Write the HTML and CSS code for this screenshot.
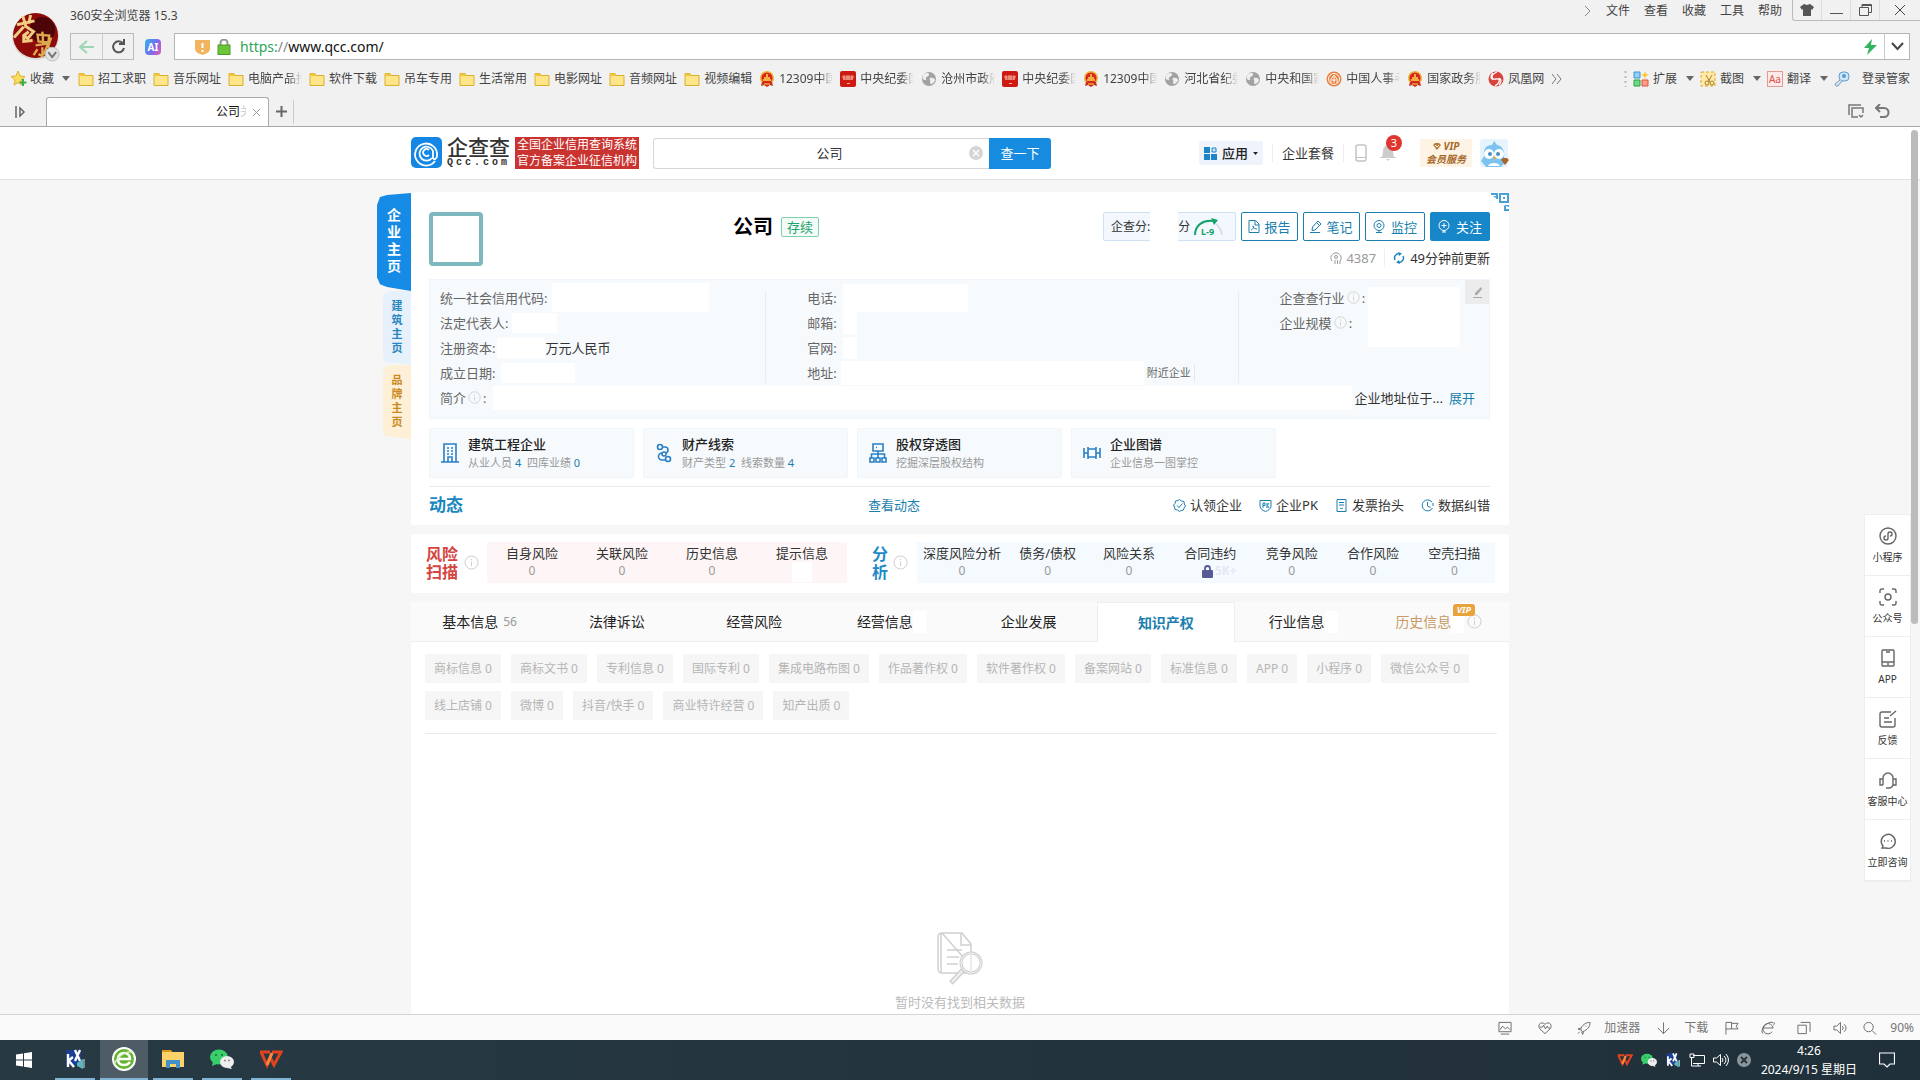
FILE: index.html
```html
<!DOCTYPE html>
<html lang="zh-CN">
<head>
    <meta charset="UTF-8">
    <meta name="viewport" content="width=device-width, initial-scale=1.0">
    <title>企查查</title>
    <link rel="stylesheet" href="styles.css">
</head>
<body>
    <!-- shared icons -->
    <svg class="sprite" aria-hidden="true">
        <symbol id="folder" viewBox="0 0 16 16"><path d="M1 2.500h5l1 2h8v10H1z" fill="#ffe58a" stroke="#d9b02c"/><path d="M1.500 2.500h4.500l1 2.500H1.500z" fill="#f0c53c"/></symbol>
        <symbol id="emblem" viewBox="0 0 16 16"><circle cx="8" cy="7" r="7" fill="#f0b13a"/><circle cx="8" cy="7" r="5.500" fill="#d6281c"/><path d="M4 9h8M5 7h6M8 3v3" stroke="#ffd84c" stroke-width="1.500"/><path d="M3 11h10l1 4-3-1-3 2-3-2-3 1z" fill="#c92a1b"/><path d="M5 13h6" stroke="#ffd84c"/></symbol>
        <symbol id="redsite" viewBox="0 0 16 16"><rect width="16" height="16" rx="2" fill="#cf1a14"/><path d="M2 6h12M3 8h10M4 4v5M7 4v5M9 4v5M12 4v5" stroke="#f3b29a"/><path d="M7 12.500h3" stroke="#f3b29a"/></symbol>
        <symbol id="globe" viewBox="0 0 16 16"><circle cx="8" cy="8" r="7" fill="#a2a2a2"/><path d="M3 3c3-2 6-1 5 1S4 6 5 8s-2 1-3 0 0-4 1-5zM9 7c3-1 5 1 5 2s-2 4-4 4 0-3-1-4 0-2 0-2z" fill="#efefef"/></symbol>
        <symbol id="orange" viewBox="0 0 16 16"><circle cx="8" cy="8" r="7.500" fill="#ea7d3a"/><circle cx="8" cy="8" r="5.500" fill="none" stroke="#fff"/><path d="M5 12V8l3-4 3 4v4M8 5v7M6 9h4" fill="none" stroke="#fff"/></symbol>
        <symbol id="phoenix" viewBox="0 0 16 16"><circle cx="8" cy="8" r="7.500" fill="#d8433e"/><path d="M9 1C2 4 3 9 8 8s4 4-1 7M5 2C1 7 4 9 6 8M11 14c4-5 1-7-1-6" fill="none" stroke="#fff" stroke-width="1.300"/></symbol>
        <symbol id="info" viewBox="0 0 16 16"><circle cx="8" cy="8" r="7" fill="none" stroke="#ccc"/><path d="M8 7v5M8 4v1.500" stroke="#ccc"/></symbol>
        <symbol id="wechat" viewBox="0 0 24 20"><ellipse cx="9" cy="8" rx="9" ry="7.500" fill="#39cd6c"/><path d="M3 12l-1 5 5-2z" fill="#39cd6c"/><circle cx="6" cy="6" r="1" fill="#186b37"/><circle cx="12" cy="6" r="1" fill="#186b37"/><ellipse cx="17" cy="13" rx="7" ry="6" fill="#eee"/><path d="M20 17l2 3-5-1z" fill="#eee"/><circle cx="15" cy="11.500" r="1" fill="#888"/><circle cx="19" cy="11.500" r="1" fill="#888"/></symbol>
        <symbol id="kx" viewBox="0 0 22 22"><path d="M2 2h15v15H2z" fill="#1b3f96"/><path d="M4 6v13M4 13l5-4M5 13l5 6M11 2l5 11M16 2l-5 11" stroke="#fff" stroke-width="2.400" fill="none"/><path d="M13 15l6-4v10l-6-3z" fill="#5ab8bd"/><path d="M20 11v9" stroke="#ddd"/></symbol>
        <symbol id="wps" viewBox="0 0 24 20"><path d="M1 3h10M2 3l6 13 5-12M11 8l4 8 7-13h-9" fill="none" stroke="#e2421f" stroke-width="3"/><path d="M8 16l5-12" stroke="#f88a3c" stroke-width="3"/></symbol>
        <symbol id="down" viewBox="0 0 8 5"><path d="M0 0h8L4 5z" fill="#666"/></symbol>
    </svg>

    <header class="chrome">
        <div class="title-row">
            <svg class="user-avatar" viewBox="0 0 50 52"><circle cx="24" cy="25" r="24" fill="#ddd"/><circle cx="24" cy="24" r="23" fill="#8f0b0b"/><circle cx="31" cy="18" r="13" fill="#4d0608"/><path d="M5 13l18-4M11 4l3 10M19 3l-2 9M12 15L2 26M13 14l9 6-6 7-5-4M17 20l-5 4v6l9-1" stroke="#f1cd83" stroke-width="3" fill="none"/><path d="M26 23l12 1-1 7-10-1zM24 34l14-2M31 20l1 14M26 38l-4 6M31 36v9l-4-2M37 32l-5 12M40 26l-3 9 3 8" stroke="#dca94f" stroke-width="2.400" fill="none"/><circle cx="41" cy="43" r="7" fill="#e3e3e3" stroke="#bbb"/><path d="M37 41l4 5 4-5" fill="none" stroke="#777" stroke-width="2"/></svg>
            <span class="app-name">360安全浏览器 15.3</span>
            <nav class="menu">
                <svg width="8" height="12" viewBox="0 0 8 12"><path d="M1 1l5 5-5 5" fill="none" stroke="#888"/></svg>
                <a href="#">文件</a><a href="#">查看</a><a href="#">收藏</a><a href="#">工具</a><a href="#">帮助</a>
            </nav>
            <div class="window-buttons">
                <button aria-label="皮肤"><svg width="14" height="12" viewBox="0 0 14 12"><path d="M4 0l3 1 3-1 4 3-2 3-1-1v7H3V5L2 6 0 3z" fill="#555"/></svg></button>
                <button aria-label="最小化"><svg width="13" height="12" viewBox="0 0 13 12"><path d="M0 9.500h13" stroke="#555"/></svg></button>
                <button aria-label="还原"><svg width="13" height="12" viewBox="0 0 13 12"><path d="M.5 3.500h9v8h-9zM3 3V.5h9.500v8H10M3 1.500h9" fill="none" stroke="#555"/></svg></button>
                <button aria-label="关闭"><svg width="12" height="12" viewBox="0 0 12 12"><path d="M1 1l10 10M11 1L1 11" stroke="#444"/></svg></button>
            </div>
        </div>

        <div class="address-row">
            <div class="nav-buttons">
                <button aria-label="后退"><svg width="16" height="14" viewBox="0 0 16 14"><path d="M15 7H1M8 1L1 7l7 6" fill="none" stroke="#9cd6b4" stroke-width="2"/></svg></button>
                <button aria-label="刷新"><svg width="15" height="15" viewBox="0 0 15 15"><path d="M12 4.500A5.500 5.500 0 1 0 13 9" fill="none" stroke="#555" stroke-width="2"/><path d="M8 5h5V0" fill="none" stroke="#555" stroke-width="2"/></svg></button>
            </div>
            <span class="ai-badge">AI</span>
            <form class="address-bar">
                <svg width="15" height="16" viewBox="0 0 15 16"><path d="M0 1h15v9c0 3-4 5-7.500 6C4 15 0 13 0 10z" fill="#f2b45e"/><path d="M7.500 4v5M7.500 11v2" stroke="#fff" stroke-width="2"/></svg>
                <svg width="14" height="16" viewBox="0 0 14 16"><path d="M3.500 7V4a3.500 3.500 0 0 1 7 0v3" fill="none" stroke="#8f9a8f" stroke-width="2"/><rect x="1" y="6" width="12" height="9.500" fill="#6cc53b" stroke="#4d9a2a"/></svg>
                <label for="url"><span class="scheme">https:</span>//</label><input id="url" type="text" value="www.qcc.com/">
                <svg width="13" height="16" viewBox="0 0 13 16"><path d="M8 0L0 9h5l-2 7 10-10H7z" fill="#34b35f"/></svg>
                <button type="button" class="address-more" aria-label="更多"><svg width="13" height="9" viewBox="0 0 13 9"><path d="M1 1l5.500 6L12 1" fill="none" stroke="#444" stroke-width="2"/></svg></button>
            </form>
        </div>

        <div class="bookmark-row">
            <a class="fav" href="#"><svg width="17" height="17" viewBox="0 0 17 17"><path d="M8 1l2 5 5 .5-4 3.500 1 5-4-2.500L4 15l1-5-4-3.500L6 6z" fill="#fbdc5f" stroke="#e0b32f"/><path d="M13 9v7M9.500 12.500h7" stroke="#3cae4d" stroke-width="2"/></svg>收藏<svg class="caret"><use href="#down"/></svg></a>
            <div class="bookmarks">
                <a class="folder" href="#"><svg><use href="#folder"/></svg><span>招工求职</span></a>
                <a class="folder" href="#"><svg><use href="#folder"/></svg><span>音乐网址</span></a>
                <a class="folder cut" href="#"><svg><use href="#folder"/></svg><span>电脑产品推</span></a>
                <a class="folder" href="#"><svg><use href="#folder"/></svg><span>软件下载</span></a>
                <a class="folder" href="#"><svg><use href="#folder"/></svg><span>吊车专用</span></a>
                <a class="folder" href="#"><svg><use href="#folder"/></svg><span>生活常用</span></a>
                <a class="folder" href="#"><svg><use href="#folder"/></svg><span>电影网址</span></a>
                <a class="folder" href="#"><svg><use href="#folder"/></svg><span>音频网址</span></a>
                <a class="folder" href="#"><svg><use href="#folder"/></svg><span>视频编辑</span></a>
                <a class="site cut" href="#"><svg><use href="#emblem"/></svg><span>12309中国</span></a>
                <a class="site cut" href="#"><svg><use href="#redsite"/></svg><span>中央纪委国</span></a>
                <a class="site cut" href="#"><svg><use href="#globe"/></svg><span>沧州市政府</span></a>
                <a class="site cut" href="#"><svg><use href="#redsite"/></svg><span>中央纪委国</span></a>
                <a class="site cut" href="#"><svg><use href="#emblem"/></svg><span>12309中国</span></a>
                <a class="site cut" href="#"><svg><use href="#globe"/></svg><span>河北省纪委</span></a>
                <a class="site cut" href="#"><svg><use href="#globe"/></svg><span>中央和国家</span></a>
                <a class="site cut" href="#"><svg><use href="#orange"/></svg><span>中国人事考</span></a>
                <a class="site cut" href="#"><svg><use href="#emblem"/></svg><span>国家政务服</span></a>
                <a class="site" href="#"><svg><use href="#phoenix"/></svg><span>凤凰网</span></a>
                <svg class="more" viewBox="0 0 12 12"><path d="M1 1l4 5-4 5M6 1l4 5-4 5" fill="none" stroke="#777"/></svg>
            </div>
            <div class="tools">
                <svg width="3" height="16" viewBox="0 0 3 16"><path d="M1.500 0v16" stroke="#bbb" stroke-width="2" stroke-dasharray="2 3"/></svg>
                <a href="#"><svg width="16" height="16" viewBox="0 0 16 16"><path d="M1 1h6v6H1z" fill="#8fd0f5" stroke="#3c93cf"/><path d="M1 9h6v6H1z" fill="#72d684" stroke="#2ba145"/><path d="M9 9h6v6H9z" fill="#ff9b87" stroke="#dc543c"/><path d="M12 0l1 3 3 1-3 1-1 3-1-3-3-1 3-1z" fill="#fbc621"/></svg>扩展<svg class="caret"><use href="#down"/></svg></a>
                <a href="#"><svg width="16" height="16" viewBox="0 0 16 16"><path d="M1 1h14v14H1z" fill="#ffe9a6" stroke="#dda933" stroke-dasharray="3 2"/><path d="M6 4l4 7M12 4l-4 7" stroke="#a98330"/><circle cx="7" cy="12" r="2" fill="none" stroke="#a98330"/><circle cx="12" cy="12" r="2" fill="none" stroke="#a98330"/></svg>截图<svg class="caret"><use href="#down"/></svg></a>
                <a href="#"><span class="aa">Aa</span>翻译<svg class="caret"><use href="#down"/></svg></a>
                <a class="keeper" href="#"><svg width="16" height="16" viewBox="0 0 16 16"><rect x="5" y="1" width="10" height="9" rx="4" fill="#cfe6f8" stroke="#5d9bd0"/><circle cx="10" cy="5" r="2" fill="#5d9bd0"/><path d="M6 9l-5 4 1 2h2l4-5" fill="#cfe6f8" stroke="#8a9aa8"/></svg>登录管家</a>
            </div>
        </div>

        <div class="tab-row">
            <svg class="side-toggle" viewBox="0 0 11 12"><path d="M1 0v12M5 2l4 4-4 4z" fill="none" stroke="#666" stroke-width="1.500"/></svg>
            <div class="browser-tab"><span>公司</span><i>关</i><button aria-label="关闭标签"><svg width="9" height="9" viewBox="0 0 9 9"><path d="M1 1l7 7M8 1L1 8" stroke="#999"/></svg></button></div>
            <button class="new-tab" aria-label="新建标签"><svg width="11" height="11" viewBox="0 0 11 11"><path d="M5.500 0v11M0 5.500h11" stroke="#666" stroke-width="2"/></svg></button>
            <div class="tab-tools">
                <svg width="16" height="15" viewBox="0 0 16 15"><path d="M1 11V1h12M10 13H4V4h11v5" fill="none" stroke="#777" stroke-width="1.500"/><path d="M11 11l2 2 2-2" fill="none" stroke="#777" stroke-width="1.500"/></svg>
                <svg width="15" height="14" viewBox="0 0 15 14"><path d="M5 0L1 4l4 4M1 4h8a4.500 4.500 0 0 1 0 9H5" fill="none" stroke="#777" stroke-width="2"/></svg>
            </div>
        </div>
    </header>

    <div class="page">
        <div class="site-header">
            <div class="wrap site-header-inner">
                <a class="logo" href="#">
                    <svg width="31" height="31" viewBox="0 0 31 31"><rect width="31" height="31" rx="5" fill="#1487e5"/><path d="M24 24a11 11 0 1 1 2-5M21 21a7 7 0 1 1 1-7v7c1 2 4 1 4-2" fill="none" stroke="#fff" stroke-width="1.800"/><path d="M18 13a3.500 3.500 0 1 0 0 5" fill="none" stroke="#fff" stroke-width="1.800"/></svg>
                    <span class="logo-text"><b>企查查</b><small>Qcc.com</small></span>
                </a>
                <p class="slogan">全国企业信用查询系统<br>官方备案企业征信机构</p>
                <form class="search">
                    <input type="text" value="公司" aria-label="搜索企业">
                    <button type="button" class="clear" aria-label="清空"><svg width="14" height="14" viewBox="0 0 14 14"><circle cx="7" cy="7" r="7" fill="#d5d5d5"/><path d="M4 4l6 6M10 4l-6 6" stroke="#fff" stroke-width="1.500"/></svg></button>
                    <button type="button" class="search-btn">查一下</button>
                </form>
                <nav class="site-nav">
                    <a class="apps" href="#"><svg width="13" height="13" viewBox="0 0 13 13"><path d="M0 0h6v6H0zM0 7h6v6H0zM7 7h6v6H7z" fill="#1d84c8"/><path d="M8 1h4v4H8z" fill="#cfe4f6" stroke="#1d84c8"/></svg>应用<svg width="5" height="3" viewBox="0 0 8 5"><path d="M0 0h8L4 5z" fill="#222"/></svg></a>
                    <a class="package" href="#">企业套餐</a>
                    <a class="phone" href="#" aria-label="手机版"><svg width="12" height="18" viewBox="0 0 12 18"><rect x="1" y="1" width="10" height="16" rx="2" fill="#fff" stroke="#c4c4c4" stroke-width="1.500"/><path d="M1 13.500h10" stroke="#c4c4c4"/></svg></a>
                    <a class="bell" href="#" aria-label="消息"><svg width="16" height="16" viewBox="0 0 16 16"><path d="M8 0c4 1 5 3 5 7l1 5h2v1H0v-1h2l1-5c0-4 1-6 5-7zM6 14h4l-2 2z" fill="#cdcdcd"/></svg><span class="badge">3</span></a>
                    <a class="vip" href="#"><em><svg width="8" height="7" viewBox="0 0 8 7"><path d="M0 2l2-2h4l2 2-4 5z" fill="#b87b35"/><path d="M2 2l2 2 2-2" fill="none" stroke="#fff"/></svg> VIP</em><em>会员服务</em></a>
                    <a class="qcc-avatar" href="#" aria-label="个人中心"><svg width="29" height="28" viewBox="0 0 29 28"><rect width="28" height="28" rx="3" fill="#e8f4fd"/><path d="M14 2l3 4c6 1 8 7 7 12l2 4-5 6H6l-5-6 3-5C3 10 6 6 12 6z" fill="#7cc3f0"/><circle cx="9" cy="15" r="5" fill="#fff"/><circle cx="19" cy="15" r="5" fill="#fff"/><circle cx="10" cy="15" r="2" fill="#4a8fc4"/><circle cx="18" cy="15" r="2" fill="#4a8fc4"/><path d="M13 18h3l-1 3z" fill="#f5a623"/><path d="M8 27c1-4 11-4 12 0" fill="#fff"/><path d="M21 21l2-2h4l2 2-4 5z" fill="#a5682a"/></svg></a>
                </nav>
            </div>
        </div>

        <main class="wrap content">
            <nav class="side-tabs">
                <a class="side-tab main" href="#">企业主页</a>
                <a class="side-tab build" href="#">建筑主页</a>
                <a class="side-tab brand" href="#">品牌主页</a>
            </nav>

            <section class="card company">
                <svg class="qr" viewBox="0 0 18 18"><path d="M0 1h6v5M18 17h-4v-4" fill="none" stroke="#4a9fd6" stroke-width="2"/><path d="M9 1h8v8H9z" fill="none" stroke="#4a9fd6" stroke-width="2"/><path d="M12 4h2v2h-2zM2 3h3v2zM12 12h6v2z" fill="#4a9fd6"/></svg>
                <div class="company-head">
                    <div class="company-logo"></div>
                    <div class="company-name">
                        <h1>公司</h1><span class="status">存续</span>
                    </div>
                    <div class="head-right">
                        <div class="actions">
                            <div class="score"><span>企查分:</span><i class="mask"></i><span>分</span><svg width="29" height="18" viewBox="0 0 29 18"><path d="M1 17C1 7 9 2 19 3" fill="none" stroke="#12a36b" stroke-width="2"/><path d="M17 0l7 2-4 5z" fill="#12a36b"/><path d="M22 6q5 4 6 11" fill="none" stroke="#ddd" stroke-width="2"/><text x="7" y="17" font-size="9" font-weight="700" font-family="Noto Sans" fill="#12a36b">L-9</text></svg></div>
                            <button class="btn"><svg width="12" height="13" viewBox="0 0 12 13"><path d="M1 .5h6.500L11 4v8.500H1zM7 1v4h4M3 10c3-1 3-4 2-4s1 3 4 3" fill="none" stroke="#1b7fae"/></svg>报告</button>
                            <button class="btn"><svg width="12" height="13" viewBox="0 0 12 13"><path d="M8 1l3 3-6 6-3 .5.500-3.500zM6.500 2.500l3 3M0 12.500h10" fill="none" stroke="#1b7fae"/></svg>笔记</button>
                            <button class="btn monitor"><svg width="12" height="13" viewBox="0 0 12 13"><circle cx="6" cy="5.500" r="5" fill="none" stroke="#1b7fae"/><circle cx="6" cy="5.500" r="2" fill="none" stroke="#1b7fae"/><path d="M3 12.500h6M6 10.500v2" stroke="#1b7fae"/></svg>监控</button>
                            <button class="btn follow"><svg width="12" height="13" viewBox="0 0 12 13"><circle cx="6" cy="5.500" r="5" fill="none" stroke="#fff"/><path d="M6 3v5M3.500 5.500h5M4 12h4M6 10.500V12" stroke="#fff"/></svg>关注</button>
                        </div>
                        <div class="updated">
                            <span class="views"><svg width="12" height="12" viewBox="0 0 12 12"><path d="M2 9a5 5 0 1 1 8 0M5 12V8M7.500 12V8M10 12V9" fill="none" stroke="#999"/><circle cx="6" cy="5" r="1.500" fill="none" stroke="#999"/></svg>4387</span>
                            <a href="#"><svg width="12" height="12" viewBox="0 0 12 12"><path d="M2 8a4.500 4.500 0 0 1 4-6.500M10 4a4.500 4.500 0 0 1-4 6.500" fill="none" stroke="#1b86bd" stroke-width="1.500"/><path d="M5 0l4 1.500L6 4zM7 12l-4-1.500L6 8z" fill="#1b86bd"/></svg>49分钟前更新</a>
                        </div>
                    </div>
                </div>

                <div class="info">
                    <button class="edit" aria-label="编辑"><svg width="11" height="12" viewBox="0 0 11 12"><path d="M9 1L3 7v2h2l5-6" fill="#aaa"/><path d="M1 11.500h9" stroke="#aaa"/></svg></button>
                    <div class="info-grid">
                        <div class="info-col">
                            <p><span>统一社会信用代码:</span><i class="mask m-code"></i></p>
                            <p><span>法定代表人:</span><i class="mask m-person"></i></p>
                            <p><span>注册资本:</span><i class="mask m-capital"></i><b>万元人民币</b></p>
                            <p><span>成立日期:</span><i class="mask m-date"></i></p>
                        </div>
                        <div class="info-col">
                            <p><span>电话:</span><i class="mask m-phone"></i></p>
                            <p><span>邮箱:</span><i class="mask m-small"></i></p>
                            <p><span>官网:</span><i class="mask m-small"></i></p>
                            <p><span>地址:</span><i class="mask m-address"></i><a class="nearby" href="#">附近企业</a></p>
                        </div>
                        <div class="info-col">
                            <i class="mask m-trade"></i>
                            <p><span>企查查行业</span><svg class="tip"><use href="#info"/></svg><span>:</span></p>
                            <p><span>企业规模</span><svg class="tip"><use href="#info"/></svg><span>:</span></p>
                        </div>
                    </div>
                    <p class="intro"><span>简介</span><svg class="tip"><use href="#info"/></svg><span>:</span><i class="mask m-intro"></i><b>企业地址位于...</b><a href="#">展开</a></p>
                </div>

                <div class="features">
                    <a class="feature" href="#">
                        <svg viewBox="0 0 18 20"><path d="M3 19V1h12v18M0 19h18M7 19v-5h4v5" fill="none" stroke="#2a7fc4" stroke-width="1.600"/><path d="M6 5h2M10 5h2M6 8h2M10 8h2M6 11h2M10 11h2" stroke="#2a7fc4" stroke-width="1.600"/></svg>
                        <span><strong>建筑工程企业</strong><small>从业人员 <i>4</i>&nbsp; 四库业绩 <i>0</i></small></span>
                    </a>
                    <a class="feature" href="#">
                        <svg viewBox="0 0 18 20"><circle cx="5" cy="4" r="2.500" fill="none" stroke="#2a7fc4" stroke-width="1.600"/><path d="M7 4h3a3 3 0 0 1 0 6H7a3 3 0 0 0 0 7h4" fill="none" stroke="#2a7fc4" stroke-width="1.600"/><circle cx="9" cy="11" r="2" fill="#fff" stroke="#2a7fc4" stroke-width="1.600"/><circle cx="13" cy="16" r="2.500" fill="none" stroke="#2a7fc4" stroke-width="1.600"/></svg>
                        <span><strong>财产线索</strong><small>财产类型 <i>2</i>&nbsp; 线索数量 <i>4</i></small></span>
                    </a>
                    <a class="feature" href="#">
                        <svg viewBox="0 0 18 20"><path d="M4 1h10v7H4zM9 8v7M2.500 15v-4h13v4M1 15h4v4H1zM7 15h4v4H7zM13 15h4v4h-4zM7 4.500h1" fill="none" stroke="#2a7fc4" stroke-width="1.600"/></svg>
                        <span><strong>股权穿透图</strong><small>挖掘深层股权结构</small></span>
                    </a>
                    <a class="feature" href="#">
                        <svg viewBox="0 0 18 20"><path d="M1 5v10M17 5v10M1 10h4M13 10h4M5 6h8v8H5zM5 4v12M13 4v12" fill="none" stroke="#2a7fc4" stroke-width="1.600"/></svg>
                        <span><strong>企业图谱</strong><small>企业信息一图掌控</small></span>
                    </a>
                </div>

                <div class="dynamic">
                    <h2>动态</h2>
                    <a class="see" href="#">查看动态</a>
                    <nav>
                        <a href="#"><svg viewBox="0 0 13 13"><path d="M6.500.5l2 1.500 2.500.5.300 2.500 1.200 2-1.500 2-.5 2-2.500.5-1.500 1-2-1.500L2 10.500 1.500 8 .5 6 2 4.500 2.500 2 5 1.500zM4 6.500l2 2 3.500-4" fill="none" stroke="#1b7fae"/></svg>认领企业</a>
                        <a href="#"><svg viewBox="0 0 13 13"><path d="M1 1.500h11V7c0 3-3 4.500-5.500 5.500C4 11.500 1 10 1 7z" fill="none" stroke="#1b7fae"/><path d="M4 9V4h2v2.500H4M8 4v5M10 4L8.500 6.500 10 9" fill="none" stroke="#1b7fae"/></svg>企业PK</a>
                        <a href="#"><svg viewBox="0 0 13 13"><path d="M2 .5h9v12H2zM4 3.500h5M4 6h5M5 9q1.500 1.500 3 0" fill="none" stroke="#1b7fae"/></svg>发票抬头</a>
                        <a href="#"><svg viewBox="0 0 13 13"><path d="M11 3a5.500 5.500 0 1 0 .5 6M6.500 3v4l3 1.500M12 4v3" fill="none" stroke="#1b7fae"/></svg>数据纠错</a>
                    </nav>
                </div>
            </section>

            <section class="card risk">
                <h2 class="risk-title"><span>风险</span><span>扫描</span></h2>
                <svg class="tip big"><use href="#info"/></svg>
                <ul class="stats red">
                    <li>自身风险<span>0</span></li>
                    <li>关联风险<span>0</span></li>
                    <li>历史信息<span>0</span></li>
                    <li>提示信息<i class="mask"></i></li>
                </ul>
                <h2 class="risk-title blue-title"><span>分</span><span>析</span></h2>
                <svg class="tip big"><use href="#info"/></svg>
                <ul class="stats blue">
                    <li>深度风险分析<span>0</span></li>
                    <li>债务/债权<span>0</span></li>
                    <li>风险关系<span>0</span></li>
                    <li>合同违约<span class="locked"><svg width="11" height="13" viewBox="0 0 11 13"><path d="M3 6V3.500a2.500 2.500 0 0 1 5 0V6" fill="none" stroke="#585a96" stroke-width="1.800"/><rect y="5" width="11" height="8" rx="1" fill="#585a96"/></svg><em>5K+</em></span></li>
                    <li>竞争风险<span>0</span></li>
                    <li>合作风险<span>0</span></li>
                    <li>空壳扫描<span>0</span></li>
                </ul>
            </section>

            <section class="card detail">
                <nav class="tabs">
                    <a href="#">基本信息 <small>56</small></a>
                    <a href="#">法律诉讼</a>
                    <a href="#">经营风险</a>
                    <a href="#">经营信息<i class="mask"></i></a>
                    <a href="#">企业发展</a>
                    <a class="active" href="#">知识产权</a>
                    <a href="#">行业信息<i class="mask"></i></a>
                    <a class="history" href="#">历史信息<span class="vip-tag">VIP</span><i class="mask"></i><svg class="tip big"><use href="#info"/></svg></a>
                </nav>
                <div class="chips">
                    <a href="#">商标信息 0</a><a href="#">商标文书 0</a><a href="#">专利信息 0</a><a href="#">国际专利 0</a><a href="#">集成电路布图 0</a><a href="#">作品著作权 0</a><a href="#">软件著作权 0</a><a href="#">备案网站 0</a><a href="#">标准信息 0</a><a href="#">APP 0</a><a href="#">小程序 0</a><a href="#">微信公众号 0</a><a href="#">线上店铺 0</a><a href="#">微博 0</a><a href="#">抖音/快手 0</a><a href="#">商业特许经营 0</a><a href="#">知产出质 0</a>
                </div>
                <div class="empty">
                    <svg width="46" height="54" viewBox="0 0 46 54"><path d="M5 1h20l9 11v9M34 34v4q0 3-3 3H5q-4 0-4-4V5q0-4 4-4zM24 1v12h10M4 2v38" fill="none" stroke="#d0d0d0" stroke-width="1.500"/><path d="M10 18h15M10 25h12M10 32h11" stroke="#d0d0d0" stroke-width="1.500"/><circle cx="34" cy="31" r="10" fill="#fff" stroke="#d0d0d0" stroke-width="3"/><circle cx="34" cy="31" r="10" fill="none" stroke="#f4f4f4"/><path d="M34 23v16" stroke="#d8d8d8"/><path d="M26 38L14 51" stroke="#d0d0d0" stroke-width="5"/><path d="M25 39L15 50" stroke="#f1f1f1" stroke-width="2"/></svg>
                    <p>暂时没有找到相关数据</p>
                </div>
            </section>
        </main>

        <aside class="float-bar">
            <a href="#"><svg viewBox="0 0 18 18"><circle cx="9" cy="9" r="8"/><path d="M7 9a2 2 0 1 0 2 2V7a2 2 0 1 1 2 2"/></svg>小程序</a>
            <a href="#"><svg viewBox="0 0 18 18"><path d="M1 5V3q0-2 2-2h2M13 1h2q2 0 2 2v2M17 13v2q0 2-2 2h-2M5 17H3q-2 0-2-2v-2"/><circle cx="9" cy="9" r="3"/></svg>公众号</a>
            <a href="#"><svg viewBox="0 0 18 18"><rect x="3" y="1" width="12" height="16" rx="1"/><path d="M3 13h12M7 3h4M8 15h2"/></svg>APP</a>
            <a href="#"><svg viewBox="0 0 18 18"><path d="M12 2H3Q1 2 1 4v11q0 2 2 2h11q2 0 2-2V8M5 8h5M5 12h8M11 6l6-5"/></svg>反馈</a>
            <a href="#"><svg viewBox="0 0 18 18"><path d="M4 14V7a5 5 0 0 1 10 0v7M4 8H1v6h3M14 8h3v6h-3M14 14q-1 3-4 3H7"/></svg>客服中心</a>
            <a href="#"><svg viewBox="0 0 18 18"><path d="M3 16l1-2a7 7 0 1 1 3 2zM5 9h1M8.500 9h1M12 9h1"/></svg>立即咨询</a>
        </aside>
        <div class="scrollbar"></div>
    </div>

    <footer class="status-bar">
        <svg viewBox="0 0 15 14"><path d="M1 1h13v10H1zM2 9l3-4 3 3 2-2 3 3M3 13.500h9"/></svg>
        <svg viewBox="0 0 15 14"><path d="M7.500 13L2 8C-1 4 3-1 7.500 3 12-1 16 4 13 8zM2 6h3l1-2 2 4 2-3 1 2h2"/></svg>
        <a href="#" class="boost"><svg viewBox="0 0 15 14"><path d="M4 9c1-5 5-8 10-8 0 5-3 8-8 10zM4 7L1 8l3 1M7 11l-1 3-1-3M3 11l-2 2M9 5h1"/></svg>加速器</a>
        <a href="#" class="download"><svg viewBox="0 0 15 14"><path d="M7 1v12M1 7l6 6 6-6"/></svg>下载</a>
        <svg viewBox="0 0 15 14"><path d="M1 14V1h6v7H1M7 2h7l-2 3 2 3H7"/></svg>
        <svg viewBox="0 0 15 14"><path d="M2 7h11a5.500 5.500 0 1 0-1 4M13 1C7-1-2 9 2 13M14 1q1 2-1 3"/></svg>
        <svg viewBox="0 0 15 14"><path d="M1 4h9v9H1zM4 1h10v10"/></svg>
        <svg viewBox="0 0 15 14"><path d="M1 5h3l4-4v12L4 9H1zM10 5q2 2 0 4M12 3q4 4 0 8"/></svg>
        <a href="#" class="zoom"><svg viewBox="0 0 15 14"><circle cx="6" cy="6" r="5"/><path d="M10 10l4 4"/></svg>90%</a>
    </footer>

    <div class="taskbar">
        <div class="start"><svg width="16" height="16" viewBox="0 0 16 16"><path d="M0 2.500L7 1.500v6H0zM8 1.300L16 0v7.500H8zM0 8.500h7v6L0 13.500zM8 8.500h8V16l-8-1.200z" fill="#fff"/></svg></div>
        <div class="task"><svg width="22" height="22"><use href="#kx"/></svg></div>
        <div class="task on"><svg width="24" height="24" viewBox="0 0 24 24"><circle cx="12" cy="12" r="11" fill="#64b432" stroke="#fff" stroke-width="2"/><path d="M6 12h12c0-8-12-8-12 0s9 7 12 3" fill="none" stroke="#fff" stroke-width="2.500"/><path d="M2 18C6 8 14 4 21 5" fill="none" stroke="#d9efc4" stroke-width="1.500"/></svg></div>
        <div class="task"><svg width="22" height="18" viewBox="0 0 22 18"><path d="M0 0h9l2 3H0z" fill="#d99b1c"/><path d="M0 2h22v15H0z" fill="#fbd26a"/><path d="M4 18v-8h14v8h-4v-4H8v4z" fill="#3f93c8"/></svg></div>
        <div class="task"><svg width="24" height="20"><use href="#wechat"/></svg></div>
        <div class="task"><svg width="24" height="20"><use href="#wps"/></svg></div>
        <div class="tray">
            <svg width="16" height="14"><use href="#wps"/></svg>
            <svg width="16" height="14"><use href="#wechat"/></svg>
            <svg width="16" height="16"><use href="#kx"/></svg>
            <svg width="16" height="14" viewBox="0 0 16 14"><path d="M4 2.500h11.500v8H4M1 1h4v3.500H1zM2.500 5v8H12M9 10v3" fill="none" stroke="#fff"/></svg>
            <svg width="16" height="14" viewBox="0 0 16 14"><path d="M.5 5h3l4-3.500v11L3.500 9h-3zM9 5q2 2 0 4M11 3q4 4 0 8M13 1q5 6 0 12" fill="none" stroke="#fff"/></svg>
            <svg width="14" height="14" viewBox="0 0 14 14"><circle cx="7" cy="7" r="7" fill="#8c959a"/><path d="M4 4l6 6M10 4l-6 6" stroke="#26343d" stroke-width="2"/></svg>
            <div class="clock">4:26<br>2024/9/15 星期日</div>
            <svg class="notice" width="16" height="16" viewBox="0 0 16 16"><path d="M.5 1h15v11H11l-3 3-3-3H.5z" fill="none" stroke="#fff" stroke-width="1.200"/></svg>
        </div>
    </div>
</body>
</html>
```
FILE: styles.css
```css
* {
    box-sizing: border-box;
}

body {
    margin: 0;
    height: 100vh;
    display: flex;
    flex-direction: column;
    overflow: hidden;
    background: #f6f6f6;
    color: #333;
    font-family: "Noto Sans", "Noto Sans CJK SC", sans-serif;
    font-size: 13px;
    line-height: 18px;
}

a {
    color: inherit;
    text-decoration: none;
}

button,
input {
    font: inherit;
    color: inherit;
    border: 0;
    padding: 0;
    background: none;
}

h1,
h2,
p,
ul {
    margin: 0;
    padding: 0;
}

i,
em,
b {
    font-style: normal;
    font-weight: 400;
}

svg {
    flex: none;
    display: block;
}

.sprite {
    width: 0;
    height: 0;
    position: absolute;
}

.mask {
    flex: none;
    background: #fff;
}

/* browser chrome */
.chrome {
    flex: none;
    background: #f1f1f1;
    border-bottom: 1px solid #aaa;
    font-size: 12px;
    color: #444;
    position: relative;
}

.title-row {
    height: 33px;
    display: flex;
    padding-left: 70px;
}

.user-avatar {
    position: absolute;
    left: 12px;
    top: 12px;
    width: 49px;
    height: 51px;
}

.app-name {
    line-height: 31px;
}

.menu {
    margin-left: auto;
    display: flex;
    align-items: center;
    gap: 14px;
    height: 22px;
    margin-right: 10px;
}

.window-buttons {
    display: flex;
    height: 21px;
    border: 1px solid #bbb;
    border-width: 0 0 1px 1px;
    border-radius: 0 0 0 3px;
}

.window-buttons button {
    width: 29px;
    display: flex;
    align-items: center;
    justify-content: center;
    border-right: 1px solid #ddd;
}

.window-buttons button:last-child {
    width: 40px;
    border: 0;
}

.address-row {
    display: flex;
    align-items: center;
    height: 27px;
    padding: 0 10px 0 70px;
}

.nav-buttons {
    display: flex;
    height: 27px;
    border: 1px solid #bbb;
}

.nav-buttons button {
    width: 31px;
    display: flex;
    align-items: center;
    justify-content: center;
}

.nav-buttons button + button {
    border-left: 1px solid #ccc;
}

.ai-badge {
    width: 16px;
    height: 16px;
    margin: 0 13px 0 11px;
    border-radius: 4px;
    background: linear-gradient(120deg, #28b7e8, #7a6af0 55%, #ea5aa8);
    color: #fff;
    font-size: 10px;
    font-weight: 700;
    line-height: 16px;
    text-align: center;
}

.address-bar {
    flex: 1;
    display: flex;
    align-items: center;
    height: 27px;
    padding-left: 20px;
    background: #fff;
    border: 1px solid #b5b5b5;
    font-size: 14px;
    gap: 7px;
}

.address-bar label {
    color: #888;
    margin-left: 2px;
}

.address-bar .scheme {
    color: #2fa65a;
}

.address-bar input {
    flex: 1;
    margin-left: -7px;
    color: #111;
}

.address-more {
    width: 25px;
    height: 25px;
    display: flex;
    align-items: center;
    justify-content: center;
    border-left: 1px solid #ccc;
}

.bookmark-row {
    display: flex;
    align-items: center;
    height: 37px;
    padding: 0 10px;
}

.bookmark-row a {
    display: flex;
    align-items: center;
    gap: 4px;
    white-space: nowrap;
}

.bookmark-row .fav {
    gap: 3px;
}

.caret {
    width: 8px;
    height: 5px;
    margin-left: 5px;
}

.bookmarks {
    display: flex;
    align-items: center;
    gap: 7px;
    margin-left: 8px;
    overflow: hidden;
}

.bookmarks a > svg {
    width: 16px;
    height: 16px;
}

.bookmarks .cut span {
    width: 54px;
    overflow: hidden;
    -webkit-mask-image: linear-gradient(90deg, #000 75%, transparent);
    mask-image: linear-gradient(90deg, #000 75%, transparent);
}

.bookmarks .more {
    width: 12px;
    height: 12px;
}

.tools {
    display: flex;
    align-items: center;
    gap: 6px;
    margin-left: auto;
}

.tools .keeper {
    gap: 12px;
}

.aa {
    width: 16px;
    height: 16px;
    border: 1px solid #e29a94;
    background: #fde9e7;
    color: #d9534a;
    font-size: 10px;
    line-height: 14px;
    text-align: center;
}

.tab-row {
    display: flex;
    height: 29px;
    align-items: center;
    padding-left: 15px;
}

.side-toggle {
    width: 11px;
    height: 12px;
    margin-right: 20px;
}

.browser-tab {
    width: 223px;
    height: 29px;
    display: flex;
    align-items: center;
    justify-content: flex-end;
    padding-right: 7px;
    background: #fff;
    border: 1px solid #aaa;
    border-bottom: 0;
    border-radius: 3px 3px 0 0;
    color: #111;
}

.browser-tab i {
    width: 6px;
    overflow: hidden;
    color: #ccc;
}

.browser-tab button {
    margin-left: 6px;
}

.new-tab {
    width: 25px;
    height: 24px;
    display: flex;
    align-items: center;
    justify-content: center;
    border-right: 1px solid #ccc;
}

.tab-tools {
    display: flex;
    gap: 11px;
    margin-left: auto;
    padding-right: 30px;
}

/* page */
.page {
    flex: 1;
    min-height: 0;
    overflow: hidden;
    position: relative;
}

.wrap {
    max-width: 1098px;
    margin: 0 auto;
}

.site-header {
    background: #fff;
    border-bottom: 1px solid #e2e2e2;
}

.site-header-inner {
    display: flex;
    align-items: center;
    height: 52px;
}

.logo {
    display: flex;
    gap: 5px;
}

.logo-text {
    color: #333;
    width: 64px;
}

.logo-text b {
    display: block;
    font-size: 21px;
    font-weight: 500;
    line-height: 20px;
}

.logo-text small {
    display: block;
    font-family: "Liberation Mono", monospace;
    font-size: 10px;
    font-weight: 700;
    line-height: 12px;
    letter-spacing: 3px;
}

.slogan {
    margin-left: 4px;
    width: 124px;
    background: #c93431;
    color: #fff;
    font-size: 12px;
    line-height: 16px;
    text-align: center;
}

.search {
    display: flex;
    height: 31px;
    margin-left: 14px;
    position: relative;
}

.search input {
    width: 336px;
    padding-left: 16px;
    border: 1px solid #d6d6d6;
    border-right: 0;
    border-radius: 3px 0 0 3px;
    text-align: center;
}

.clear {
    position: absolute;
    right: 68px;
    top: 8px;
}

.search-btn {
    width: 62px;
    background: #168be0;
    color: #fff;
    border-radius: 0 3px 3px 0;
}

.site-nav {
    display: flex;
    align-items: center;
    margin-left: auto;
}

.apps {
    display: flex;
    align-items: center;
    gap: 5px;
    height: 24px;
    padding: 0 5px;
    background: #eef3fc;
    border-radius: 2px;
    color: #222;
    font-weight: 500;
}

.package {
    margin-left: 9px;
    padding: 0 9px;
    border: 1px solid #eee;
    border-width: 0 1px;
}

.phone {
    margin-left: 11px;
}

.bell {
    position: relative;
    margin-left: 13px;
}

.badge {
    position: absolute;
    left: 6px;
    top: -10px;
    width: 16px;
    height: 16px;
    border-radius: 8px;
    background: #e0352f;
    color: #fff;
    font-size: 11px;
    line-height: 16px;
    text-align: center;
}

.vip {
    margin: 0 8px 0 24px;
    width: 52px;
    height: 28px;
    background: #fdf4e6;
    color: #a8682a;
    font-size: 10px;
    line-height: 13px;
    padding-top: 1px;
}

.vip em {
    display: flex;
    align-items: center;
    justify-content: center;
    gap: 3px;
    font-style: italic;
    font-weight: 700;
}

.content {
    position: relative;
    margin-top: 12px;
}

.side-tabs {
    position: absolute;
    right: 100%;
    top: 1px;
    display: flex;
    flex-direction: column;
    align-items: flex-end;
}

.side-tab {
    width: 28px;
    height: 74px;
    padding-right: 2px;
    display: flex;
    align-items: center;
    justify-content: center;
    writing-mode: vertical-rl;
    font-size: 11px;
    font-weight: 700;
    letter-spacing: 3px;
    border-radius: 8px 0 0 8px;
}

.side-tab.main {
    width: 34px;
    height: 98px;
    color: #fff;
    font-size: 14px;
    background: #168be5;
    clip-path: polygon(0 12px, 3px 4px, 10px 2px, 100% 0, 100% 100%, 10px 96%, 3px 93%, 0 86%);
}

.side-tab.build {
    color: #2a86c0;
    background: #e6f1fb;
    clip-path: polygon(0 0, 100% 0, 100% 100%, 0 71px);
}

.side-tab.brand {
    color: #c98a22;
    background: #fdf0d6;
    clip-path: polygon(0 0, 100% 0, 100% 100%, 0 71px);
}

.card {
    background: #fff;
    margin-bottom: 9px;
    border-radius: 2px;
}

.company {
    padding: 20px 19px 2px 18px;
    position: relative;
}

.qr {
    position: absolute;
    right: 0;
    top: 1px;
    width: 18px;
    height: 18px;
}

.company-head {
    display: flex;
    height: 67px;
}

.company-logo {
    width: 54px;
    height: 54px;
    border: 4px solid #7db8bf;
    border-radius: 4px;
    flex: none;
}

.company-name {
    display: flex;
    align-items: center;
    height: 30px;
    margin-left: 250px;
    gap: 8px;
    flex: none;
}

.company-name h1 {
    font-size: 20px;
    line-height: 30px;
    color: #000;
}

.status {
    height: 20px;
    padding: 0 5px;
    border: 1px solid #7fd0ae;
    background: #f2fbf7;
    border-radius: 2px;
    color: #1fa36c;
}

.head-right {
    margin-left: auto;
}

.actions {
    display: flex;
    gap: 5px;
}

.score {
    width: 133px;
    height: 29px;
    display: flex;
    align-items: center;
    padding: 0 7px;
    background: #f2f8fe;
    border: 1px solid #cfe2f3;
    font-size: 12px;
    border-radius: 2px;
}

.score .mask {
    width: 28px;
    height: 29px;
}

.score svg {
    margin-left: 4px;
}

.btn {
    width: 57px;
    height: 29px;
    display: flex;
    align-items: center;
    justify-content: center;
    gap: 4px;
    border: 1px solid #1b7fae;
    border-radius: 2px;
    color: #1b7fae;
}

.monitor,
.follow {
    width: 60px;
    gap: 6px;
}

.follow {
    background: #1787c9;
    border-color: #1787c9;
    color: #fff;
}

.updated {
    display: flex;
    justify-content: flex-end;
    margin-top: 8px;
}

.updated .views,
.updated a {
    display: flex;
    align-items: center;
    gap: 5px;
}

.updated .views {
    gap: 4px;
    color: #999;
    padding-right: 8px;
    margin-right: 8px;
    border-right: 1px solid #eee;
}

.info {
    padding: 5px 10px 8px;
    position: relative;
    background: #f6fafd;
    border: 1px solid #eef4f9;
}

.edit {
    position: absolute;
    right: 0;
    top: 0;
    width: 24px;
    height: 24px;
    display: flex;
    align-items: center;
    justify-content: center;
    background: #ececec;
}

.info-grid {
    display: grid;
    grid-template-columns: 31fr 45fr 23fr;
}

.info p {
    display: flex;
    align-items: center;
    height: 25px;
    color: #666;
    white-space: nowrap;
}

.info p b {
    color: #333;
}

.info-col {
    position: relative;
}

.info-col + .info-col {
    padding-left: 42px;
    background: linear-gradient(#e6eef5, #e6eef5) 0 6px / 1px 92px no-repeat;
}

.tip {
    width: 13px;
    height: 13px;
    margin: 0 2px;
}

.tip.big {
    width: 15px;
    height: 15px;
    margin: 0 3px;
}

.m-code {
    width: 157px;
    height: 29px;
    margin-left: 5px;
}

.m-person {
    width: 45px;
    height: 20px;
    margin-left: 4px;
}

.m-capital {
    width: 48px;
    height: 20px;
    margin-left: 2px;
}

.m-date {
    width: 74px;
    height: 20px;
    margin-left: 6px;
}

.m-phone {
    width: 125px;
    height: 28px;
    margin-left: 6px;
}

.m-small {
    width: 14px;
    height: 22px;
    margin-left: 6px;
}

.m-address {
    width: 303px;
    height: 24px;
    margin-left: 4px;
}

.m-trade {
    position: absolute;
    left: 130px;
    top: 2px;
    width: 92px;
    height: 60px;
}

.m-intro {
    flex: 1;
    height: 24px;
    margin: 0 3px 0 6px;
}

.nearby {
    padding: 0 3px;
    border-right: 1px solid #e4e9ee;
    font-size: 11px;
}

.intro a {
    margin: 0 4px 0 6px;
    color: #1b7fae;
}

.features {
    display: grid;
    grid-template-columns: repeat(5, 1fr);
    gap: 9px;
    margin-top: 9px;
}

.feature {
    height: 50px;
    display: flex;
    align-items: center;
    gap: 9px;
    padding: 0 11px;
    background: #f6fafd;
    border: 1px solid #f0f5fa;
    border-radius: 2px;
    white-space: nowrap;
}

.feature svg {
    width: 18px;
    height: 20px;
}

.feature strong {
    display: block;
    color: #222;
    font-weight: 500;
    line-height: 20px;
}

.feature small {
    display: block;
    font-size: 11px;
    color: #999;
}

.feature i {
    color: #1b7fae;
}

.dynamic {
    display: grid;
    grid-template-columns: 5fr auto 7fr;
    align-items: center;
    height: 37px;
    margin-top: 8px;
    border-top: 1px solid #eaeaea;
}

.dynamic h2 {
    font-size: 17px;
    color: #1787c0;
}

.dynamic .see {
    padding-left: 32px;
    color: #1b7fae;
}

.dynamic nav {
    display: flex;
    justify-content: flex-end;
    gap: 17px;
}

.dynamic nav a {
    display: flex;
    align-items: center;
    gap: 4px;
    white-space: nowrap;
}

.dynamic nav svg {
    width: 13px;
    height: 13px;
}

.risk {
    display: flex;
    align-items: center;
    padding: 8px 14px 10px 15px;
}

.risk-title {
    display: flex;
    flex-direction: column;
    font-size: 16px;
    line-height: 18px;
    color: #d4453f;
    margin-right: 3px;
}

.blue-title {
    margin-left: 25px;
    margin-right: 2px;
    color: #1c8bc8;
}

.stats {
    display: flex;
    height: 41px;
    list-style: none;
    text-align: center;
    white-space: nowrap;
}

.stats.red {
    flex: 0 1 360px;
    margin-left: 5px;
    background: #fef6f6;
}

.stats.blue {
    flex: 1;
    margin-left: 6px;
    background: #f5fafe;
}

.stats li {
    flex: 1;
    padding-top: 2px;
}

.stats.blue li:first-child {
    flex: 0 0 90px;
}

.stats span {
    display: block;
    color: #999;
    font-size: 12px;
}

.stats .mask {
    display: block;
    width: 20px;
    height: 20px;
    margin: 0 auto;
}

.stats .locked {
    display: flex;
    justify-content: center;
    align-items: center;
    gap: 2px;
}

.locked em {
    color: #e6e6f8;
    font-weight: 700;
    margin-right: -18px;
}

.tabs {
    display: grid;
    grid-template-columns: repeat(8, 1fr);
    height: 40px;
    background: #fafafa;
    border-bottom: 1px solid #eee;
    font-size: 14px;
    color: #222;
}

.tabs a {
    display: flex;
    align-items: center;
    justify-content: center;
    white-space: nowrap;
}

.tabs small {
    margin-left: 5px;
    color: #999;
    font-size: 12px;
}

.tabs .mask {
    width: 13px;
    height: 22px;
}

.tabs .active {
    background: #fff;
    border: 1px solid #eee;
    border-bottom: 0;
    margin-bottom: -1px;
    color: #1b7fae;
    font-weight: 700;
}

.tabs .history {
    color: #c79a66;
    position: relative;
}

.vip-tag {
    position: absolute;
    left: 81px;
    top: 2px;
    width: 22px;
    height: 12px;
    border-radius: 3px 3px 3px 0;
    background: #e8a33d;
    color: #fff;
    font-size: 9px;
    font-style: italic;
    font-weight: 700;
    line-height: 12px;
    text-align: center;
}

.chips {
    display: flex;
    flex-wrap: wrap;
    gap: 8px 10px;
    margin: 0 12px 0 14px;
    padding: 12px 0 13px;
    border-bottom: 1px solid #eaeaea;
    font-size: 12px;
    color: #b5b5b5;
}

.chips a {
    padding: 0 9px;
    line-height: 29px;
    background: #f6f6f6;
}

.empty {
    display: flex;
    flex-direction: column;
    align-items: center;
    gap: 7px;
    padding: 198px 0 60px;
    color: #bbb;
}

.float-bar {
    position: absolute;
    right: 9px;
    top: 387px;
    width: 47px;
    background: #fff;
    border: 1px solid #eee;
}

.float-bar a {
    height: 61px;
    display: flex;
    flex-direction: column;
    align-items: center;
    justify-content: center;
    gap: 3px;
    padding-top: 2px;
    border-bottom: 1px solid #eee;
    font-size: 10px;
    white-space: nowrap;
}

.float-bar svg {
    width: 18px;
    height: 18px;
    fill: none;
    stroke: #666;
    stroke-width: 1.4;
}

.scrollbar {
    position: absolute;
    right: 2px;
    top: 3px;
    width: 7px;
    height: 494px;
    border-radius: 4px;
    background: #bcbcbc;
}

.status-bar {
    flex: none;
    display: flex;
    align-items: center;
    justify-content: flex-end;
    gap: 22px;
    height: 26px;
    padding-right: 6px;
    background: #fafafa;
    border-top: 1px solid #d5d5d5;
    color: #777;
    font-size: 12px;
}

.status-bar svg {
    width: 14px;
    height: 14px;
    fill: none;
    stroke: #666;
}

.status-bar > svg:first-child {
    margin-right: 4px;
}

.status-bar a {
    display: flex;
    align-items: center;
    gap: 13px;
}

.boost,
.download {
    margin-right: -5px;
}

.status-bar .boost {
    margin-left: 3px;
}

.status-bar .zoom {
    margin-left: -6px;
}

/* taskbar */
.taskbar {
    flex: none;
    display: flex;
    height: 40px;
    background: linear-gradient(90deg, #273a44, #22313a 75%, #20303a);
    color: #fff;
    font-size: 12px;
}

.start {
    width: 46px;
    display: flex;
    align-items: center;
    justify-content: center;
    margin: 0 8px 0 1px;
}

.task {
    width: 40px;
    margin-right: 9px;
    display: flex;
    align-items: center;
    justify-content: center;
    border-bottom: 2px solid #82b4d6;
}

.task.on {
    width: 48px;
    margin: 0 5px 0 -4px;
    background: #4e5d65;
}

.tray {
    display: flex;
    align-items: center;
    gap: 8px;
    margin-left: auto;
    padding-right: 5px;
}

.clock {
    text-align: center;
    margin: 0 14px 0 2px;
    line-height: 19px;
}

.notice {
    margin-right: 20px;
}
```
